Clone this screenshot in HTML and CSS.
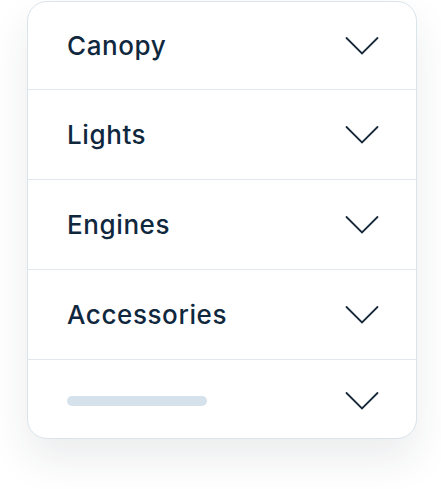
FILE: index.html
```html
<!DOCTYPE html>
<html>
<head>
<meta name="viewport" content="width=device-width, initial-scale=1">
<link rel="stylesheet" href="styles.css">
</head>
<body>

<div class="accordion">
	<div class="acc-row">
		<span class="acc-title">Canopy</span>
		<svg class="chevron" width="34" height="20" viewBox="0 0 34 20"><polyline points="1.5,2 17,17.5 32.5,2" /></svg>
	</div>
	<div class="acc-row">
		<span class="acc-title">Lights</span>
		<svg class="chevron" width="34" height="20" viewBox="0 0 34 20"><polyline points="1.5,2 17,17.5 32.5,2" /></svg>
	</div>
	<div class="acc-row">
		<span class="acc-title">Engines</span>
		<svg class="chevron" width="34" height="20" viewBox="0 0 34 20"><polyline points="1.5,2 17,17.5 32.5,2" /></svg>
	</div>
	<div class="acc-row">
		<span class="acc-title">Accessories</span>
		<svg class="chevron" width="34" height="20" viewBox="0 0 34 20"><polyline points="1.5,2 17,17.5 32.5,2" /></svg>
	</div>
	<div class="acc-row acc-last">
		<span class="skeleton"></span>
		<svg class="chevron" width="34" height="20" viewBox="0 0 34 20"><polyline points="1.5,2 17,17.5 32.5,2" /></svg>
	</div>
</div>

</body>
</html>
```

FILE: styles.css
```css
html, body {
	background: #ffffff;
}

body {
	margin: 0;
	padding: 1px 0 50px 27px;
	font-family: "Inter", "Open Sans", sans-serif;
}

.accordion {
	width: 388px;
	background: #ffffff;
	border: 1px solid #d9e4ec;
	border-radius: 20px;
	box-shadow: 0 20px 40px rgba(30, 40, 55, 0.09);
	overflow: hidden;
}

.acc-row {
	height: 89px;
	display: flex;
	align-items: center;
	justify-content: space-between;
	padding: 0 37px 0 39px;
	border-bottom: 1px solid #e2e8ee;
}

.acc-row:first-child {
	height: 87px;
}

.acc-last {
	height: 78px;
	border-bottom: none;
	padding-top: 3px;
	box-sizing: border-box;
}

.acc-title {
	font-size: 26px;
	font-weight: 500;
	color: #10283e;
	letter-spacing: 0.6px;
}

.skeleton {
	width: 140px;
	height: 10px;
	border-radius: 5px;
	background: #d5e2eb;
}

.chevron {
	fill: none;
	stroke: #182a3b;
	stroke-width: 1.8;
	stroke-linecap: round;
	stroke-linejoin: miter;
}
```
